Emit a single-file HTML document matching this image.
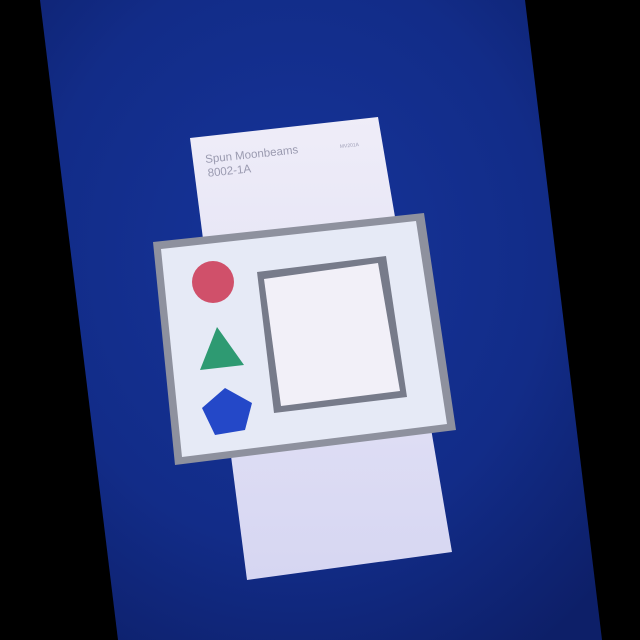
<!DOCTYPE html>
<html><head><meta charset="utf-8"><style>
html,body{margin:0;padding:0;background:#000;}
svg{display:block}
</style></head><body>
<svg width="640" height="640" viewBox="0 0 640 640" xmlns="http://www.w3.org/2000/svg">
<defs>
<radialGradient id="bg" cx="0.45" cy="0.4" r="0.75">
<stop offset="0" stop-color="#16349a"/>
<stop offset="0.6" stop-color="#122c88"/>
<stop offset="1" stop-color="#0d1f68"/>
</radialGradient>
<linearGradient id="card" x1="0" y1="0" x2="0" y2="1">
<stop offset="0" stop-color="#efedf8"/>
<stop offset="1" stop-color="#d6d6f2"/>
</linearGradient>
</defs>
<rect width="640" height="640" fill="#000"/>
<polygon points="40,0 525,0 602,640 118,640" fill="url(#bg)"/>
<polygon points="190,138 378,117 452,552 247,580" fill="url(#card)"/>
<g transform="rotate(-6 205 157)" font-family="Liberation Sans, sans-serif" fill="#9a9ab0">
<text x="205" y="163" font-size="11.5">Spun Moonbeams</text>
<text x="206" y="177" font-size="11.5">8002-1A</text>
</g>
<text x="340" y="148" font-size="5" fill="#a0a0b8" font-family="Liberation Sans, sans-serif" transform="rotate(-6 340 148)">MV201A</text>
<polygon points="153,242 424,213 456,430 175,465" fill="#8e919e"/>
<polygon points="161,249 416,221 447,424 182,457" fill="#e6eaf6"/>
<polygon points="257,272 386,256 407,397 274,413" fill="#777b8a"/>
<polygon points="264,279 378,263 400,391 281,406" fill="#f2f0f8"/>
<circle cx="213" cy="282" r="21" fill="#d0506a"/>
<polygon points="217,327 200,370 244,365" fill="#2e9a72"/>
<polygon points="225,388 252,403 245,430 215,435 202,408" fill="#2448c8"/>
</svg>
</body></html>
